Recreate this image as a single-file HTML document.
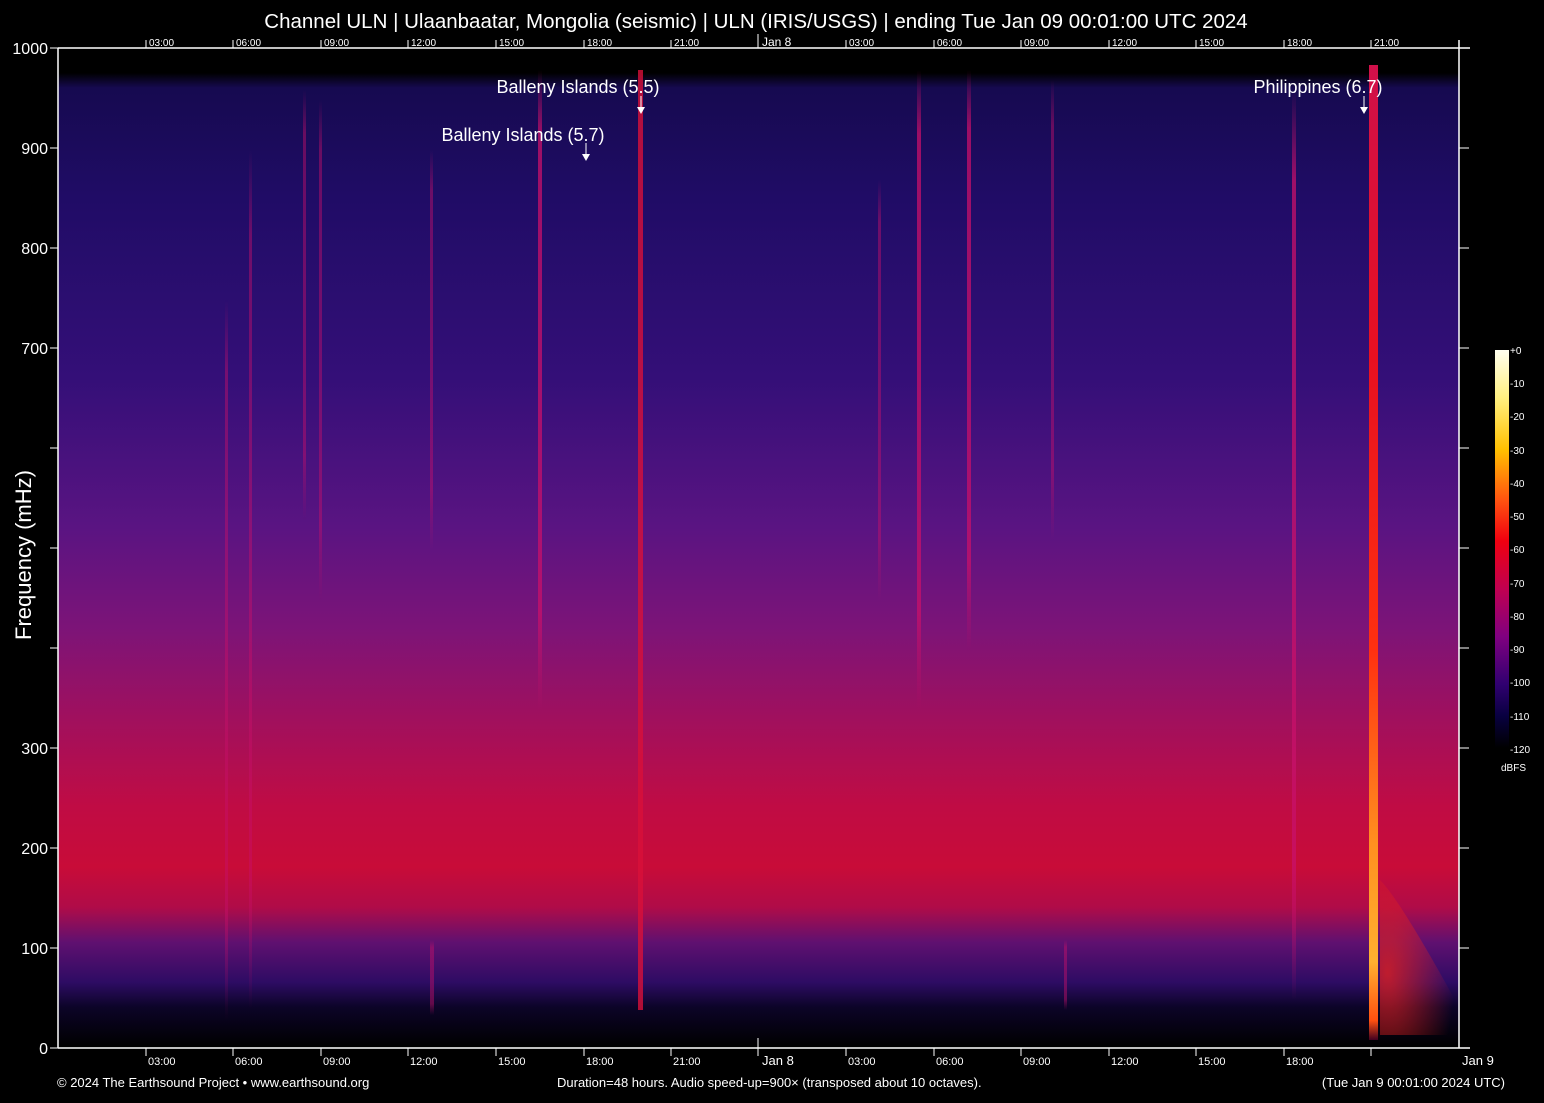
<!DOCTYPE html>
<html><head><meta charset="utf-8"><style>
html,body{margin:0;padding:0;background:#000;}
body{width:1544px;height:1098px;overflow:hidden;font-family:"Liberation Sans",sans-serif;}
</style></head><body>
<svg width="1544" height="1098" xmlns="http://www.w3.org/2000/svg" font-family="Liberation Sans, sans-serif">
<defs>
<linearGradient id="bg" x1="0" y1="0" x2="0" y2="1">
<stop offset="0" stop-color="#000"/>
<stop offset="0.025" stop-color="#000"/>
<stop offset="0.04" stop-color="#160a50"/>
<stop offset="0.15" stop-color="#200c66"/>
<stop offset="0.33" stop-color="#340f78"/>
<stop offset="0.48" stop-color="#5a1482"/>
<stop offset="0.58" stop-color="#7c1478"/>
<stop offset="0.67" stop-color="#a0105e"/>
<stop offset="0.76" stop-color="#c00c44"/>
<stop offset="0.82" stop-color="#c80c38"/>
<stop offset="0.86" stop-color="#b00c48"/>
<stop offset="0.895" stop-color="#601070"/>
<stop offset="0.935" stop-color="#2e0c64"/>
<stop offset="0.96" stop-color="#0c0428"/>
<stop offset="1" stop-color="#000"/>
</linearGradient>
<linearGradient id="cb" x1="0" y1="0" x2="0" y2="1">
<stop offset="0" stop-color="#fffff0"/>
<stop offset="0.12" stop-color="#fff080"/>
<stop offset="0.25" stop-color="#ffc000"/>
<stop offset="0.38" stop-color="#ff5010"/>
<stop offset="0.48" stop-color="#f00010"/>
<stop offset="0.6" stop-color="#c00050"/>
<stop offset="0.72" stop-color="#800080"/>
<stop offset="0.84" stop-color="#300070"/>
<stop offset="0.92" stop-color="#080040"/>
<stop offset="1" stop-color="#000"/>
</linearGradient>
<linearGradient id="ph" x1="0" y1="0" x2="0" y2="1">
<stop offset="0" stop-color="#d0104a"/>
<stop offset="0.3" stop-color="#e81020"/>
<stop offset="0.6" stop-color="#ff3010"/>
<stop offset="0.8" stop-color="#ff9020"/>
<stop offset="0.92" stop-color="#ffb030"/>
<stop offset="0.98" stop-color="#ff5010"/>
<stop offset="1" stop-color="#400020"/>
</linearGradient>
<linearGradient id="st" x1="0" y1="0" x2="0" y2="1">
<stop offset="0" stop-color="#c8106a" stop-opacity="0"/>
<stop offset="0.1" stop-color="#c8106a" stop-opacity="1"/>
<stop offset="0.85" stop-color="#c8106a" stop-opacity="1"/>
<stop offset="1" stop-color="#c8106a" stop-opacity="0"/>
</linearGradient>
<radialGradient id="fl" cx="0.1" cy="0.6" r="0.9">
<stop offset="0" stop-color="#e02020" stop-opacity="0.8"/>
<stop offset="1" stop-color="#e02020" stop-opacity="0"/>
</radialGradient>
</defs>
<rect x="58" y="48" width="1401" height="999" fill="url(#bg)"/>
<g fill="url(#st)" opacity="0.45">
<rect x="225" y="300" width="3" height="720"/>
<rect x="249" y="150" width="3" height="860"/>
<rect x="303" y="90" width="3" height="430"/>
<rect x="319" y="100" width="3" height="500"/>
<rect x="430" y="150" width="3" height="400"/>
<rect x="430" y="940" width="4" height="75"/>
<rect x="1051" y="80" width="3" height="460"/>
<rect x="878" y="180" width="3" height="420"/>
<rect x="1064" y="940" width="3" height="70"/>
</g>
<g fill="url(#st)" opacity="0.75">
<rect x="538" y="70" width="4" height="640"/>
<rect x="917" y="70" width="4" height="640"/>
<rect x="967" y="70" width="4" height="580"/>
<rect x="1292" y="90" width="4" height="910"/>
</g>
<rect x="638" y="70" width="5" height="940" fill="#d8103a" opacity="0.8"/>
<path d="M1380,880 Q1400,900 1455,1000 L1455,1035 L1380,1035 Z" fill="url(#fl)"/>
<rect x="1369" y="65" width="9" height="975" fill="url(#ph)"/>
<g stroke="#fff" stroke-width="1.5" fill="none">
<line x1="58" y1="48" x2="1470" y2="48"/>
<line x1="58" y1="48" x2="58" y2="1048"/>
<line x1="58" y1="1048" x2="1470" y2="1048"/>
<line x1="1459" y1="40" x2="1459" y2="1048"/>
</g>
<g stroke="#fff" stroke-width="1">
<path d="M50,48h8M50,148h8M50,248h8M50,348h8M50,448h8M50,548h8M50,648h8M50,748h8M50,848h8M50,948h8M50,1048h8"/>
<path d="M1459,148h10M1459,248h10M1459,348h10M1459,448h10M1459,548h10M1459,648h10M1459,748h10M1459,848h10M1459,948h10"/>
<path d="M146,1048v8M233,1048v8M321,1048v8M408,1048v8M496,1048v8M584,1048v8M671,1048v8M758,1038v18M846,1048v8M934,1048v8M1021,1048v8M1109,1048v8M1196,1048v8M1284,1048v8M1371,1048v8"/>
<path d="M146,40v8M233,40v8M321,40v8M408,40v8M496,40v8M584,40v8M671,40v8M758,34v14M846,40v8M934,40v8M1021,40v8M1109,40v8M1196,40v8M1284,40v8M1371,40v8"/>
</g>
<g fill="#fff" font-size="16" text-anchor="end">
<text x="48" y="54">1000</text><text x="48" y="154">900</text><text x="48" y="254">800</text><text x="48" y="354">700</text>
<text x="48" y="754">300</text><text x="48" y="854">200</text><text x="48" y="954">100</text><text x="48" y="1054">0</text>
</g>
<text transform="translate(31,555) rotate(-90)" fill="#fff" font-size="22" text-anchor="middle">Frequency (mHz)</text>
<text x="756" y="28" fill="#fff" font-size="20.5" text-anchor="middle">Channel ULN | Ulaanbaatar, Mongolia (seismic) | ULN (IRIS/USGS) | ending Tue Jan 09 00:01:00 UTC 2024</text>
<g fill="#fff" font-size="10">
<text x="149" y="46">03:00</text><text x="236" y="46">06:00</text><text x="324" y="46">09:00</text><text x="411" y="46">12:00</text><text x="499" y="46">15:00</text><text x="587" y="46">18:00</text><text x="674" y="46">21:00</text><text x="762" y="46" font-size="12">Jan  8</text><text x="849" y="46">03:00</text><text x="937" y="46">06:00</text><text x="1024" y="46">09:00</text><text x="1112" y="46">12:00</text><text x="1199" y="46">15:00</text><text x="1287" y="46">18:00</text><text x="1374" y="46">21:00</text>
</g>
<g fill="#fff" font-size="11">
<text x="148" y="1065">03:00</text><text x="235" y="1065">06:00</text><text x="323" y="1065">09:00</text><text x="410" y="1065">12:00</text><text x="498" y="1065">15:00</text><text x="586" y="1065">18:00</text><text x="673" y="1065">21:00</text><text x="762" y="1065" font-size="13">Jan  8</text><text x="848" y="1065">03:00</text><text x="936" y="1065">06:00</text><text x="1023" y="1065">09:00</text><text x="1111" y="1065">12:00</text><text x="1198" y="1065">15:00</text><text x="1286" y="1065">18:00</text><text x="1462" y="1065" font-size="13">Jan  9</text>
</g>
<g fill="#fff" font-size="18" text-anchor="middle">
<text x="578" y="93">Balleny Islands (5.5)</text>
<text x="523" y="141">Balleny Islands (5.7)</text>
<text x="1318" y="93">Philippines (6.7)</text>
</g>
<g stroke="#fff" stroke-width="1"><path d="M641,96v12M586,143v12M1364,96v12"/></g>
<g fill="#fff"><path d="M637,107h8l-4,7z"/><path d="M582,154h8l-4,7z"/><path d="M1360,107h8l-4,7z"/></g>
<rect x="1495" y="350" width="14" height="398" fill="url(#cb)"/>
<g fill="#fff" font-size="10">
<text x="1510" y="354">+0</text><text x="1510" y="387">-10</text><text x="1510" y="420">-20</text><text x="1510" y="454">-30</text><text x="1510" y="487">-40</text><text x="1510" y="520">-50</text><text x="1510" y="553">-60</text><text x="1510" y="587">-70</text><text x="1510" y="620">-80</text><text x="1510" y="653">-90</text><text x="1510" y="686">-100</text><text x="1510" y="720">-110</text><text x="1510" y="753">-120</text><text x="1501" y="771">dBFS</text>
</g>
<g fill="#fff" font-size="13">
<text x="57" y="1087">© 2024 The Earthsound Project • www.earthsound.org</text>
<text x="557" y="1087">Duration=48 hours. Audio speed-up=900× (transposed about 10 octaves).</text>
<text x="1505" y="1087" text-anchor="end">(Tue Jan  9 00:01:00 2024 UTC)</text>
</g>
</svg>
</body></html>
